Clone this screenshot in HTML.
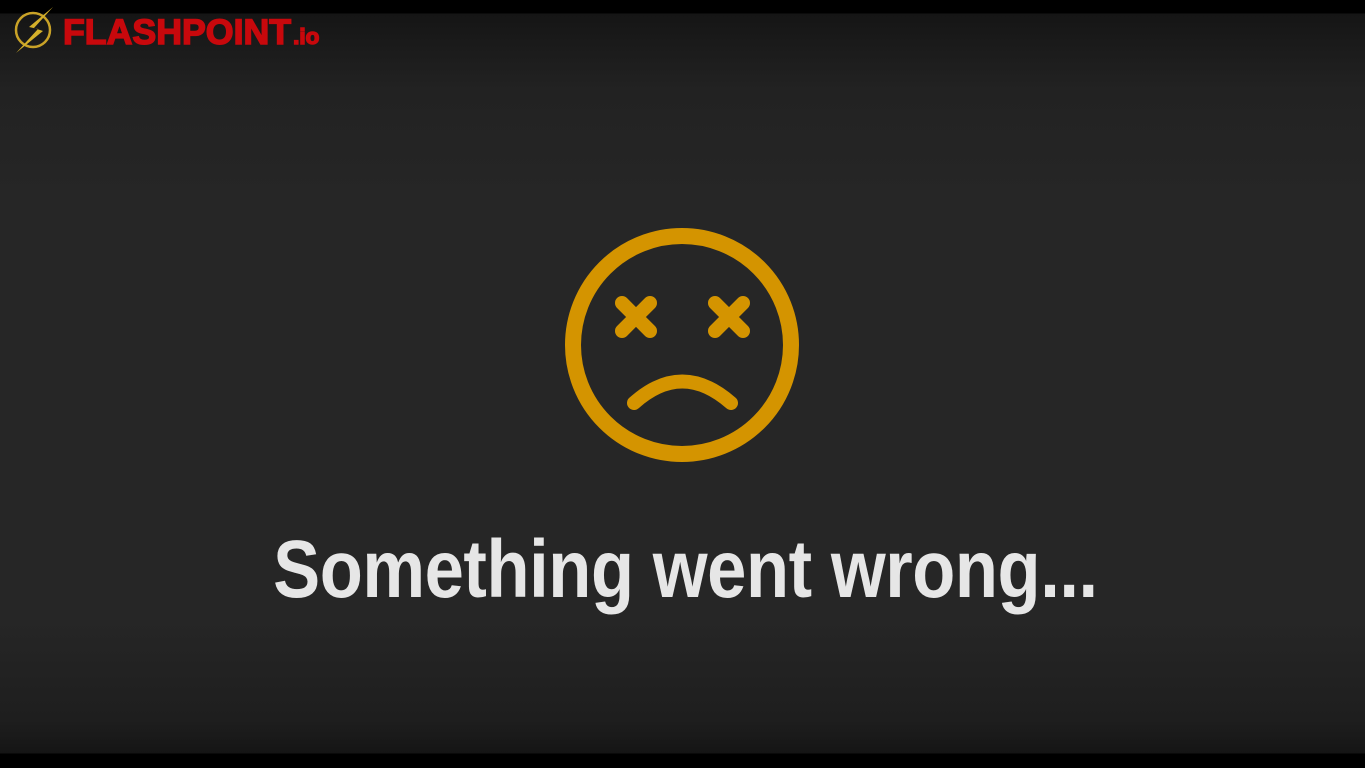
<!DOCTYPE html>
<html><head><meta charset="utf-8"><style>
html,body{margin:0;padding:0;width:1365px;height:768px;overflow:hidden;background:#262626;}
body{position:relative;font-family:"Liberation Sans",sans-serif;
background:linear-gradient(to bottom,#000 0,#000 13px,#151515 14px,#222 90px,#262626 200px,#262626 620px,#1e1e1e 720px,#151515 753px,#000 754px,#000 768px);}
.logo{position:absolute;left:13px;top:6px;}
.brand{position:absolute;left:63px;top:13px;color:#c8080c;font-weight:bold;font-size:35px;letter-spacing:0px;line-height:40px;transform:scaleX(1.02);transform-origin:left;-webkit-text-stroke:1.5px #c8080c;}
.brand small{font-size:22px;margin-left:2px;}
.face{position:absolute;left:0;top:0;}
.msg{position:absolute;left:0;width:1365px;top:520px;text-align:center;color:#e6e6e6;font-weight:bold;font-size:82px;line-height:100px;}
.msg span{display:inline-block;transform:scaleX(0.86);letter-spacing:-0.5px;margin-left:6px;}
</style></head><body>
<svg class="logo" width="44" height="48" viewBox="0 0 44 48">
<circle cx="20" cy="24" r="17" fill="none" stroke="#c9a227" stroke-width="2.5"/>
<path d="M40 1 L16 21 L25 23 L3 47 L30 25 L21 22 L40 1Z" fill="#d4b02a"/>
</svg>
<div class="brand">FLASHPOINT<small>.io</small></div>
<svg class="face" width="1365" height="768">
<g fill="none" stroke="#d49400" stroke-linecap="round">
<circle cx="682" cy="345" r="109" stroke-width="16"/>
<path d="M622 303 L650 331 M650 303 L622 331 M715 303 L743 331 M743 303 L715 331" stroke-width="14"/>
<path d="M634 403 Q682 360 731 403" stroke-width="14"/>
</g></svg>
<div class="msg"><span>Something went wrong...</span></div>
</body></html>
